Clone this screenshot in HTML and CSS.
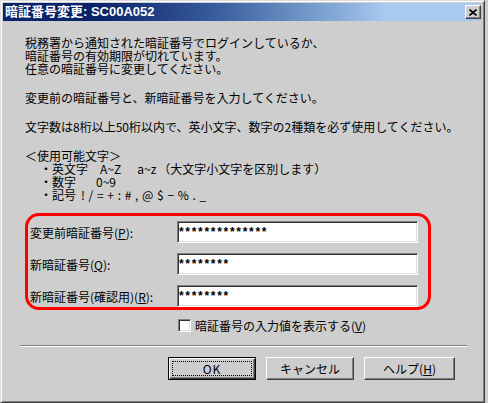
FILE: index.html
```html
<!DOCTYPE html>
<html lang="ja">
<head>
<meta charset="utf-8">
<title>暗証番号変更</title>
<link rel="stylesheet" href="styles.css">
</head>
<body>
<div class="window">
  <div class="titlebar">
    <span class="title">暗証番号変更: SC00A052</span>
    <span class="close"><svg width="8" height="7" viewBox="0 0 8 7"><path d="M0.5 0.5 L7.5 6.5 M7.5 0.5 L0.5 6.5" stroke="#000" stroke-width="1.6" fill="none"/></svg></span>
  </div>
  <div class="content">
    <p class="para">税務署から通知された暗証番号でログインしているか、<br>暗証番号の有効期限が切れています。<br>任意の暗証番号に変更してください。</p>
    <p class="para">変更前の暗証番号と、新暗証番号を入力してください。</p>
    <p class="para">文字数は8桁以上50桁以内で、英小文字、数字の2種類を必ず使用してください。</p>
    <div class="para last">
      <div>＜使用可能文字＞</div>
      <div class="item">・英文字<span class="gap g12"></span>A~Z<span class="gap g16"></span>a~z<span class="gap g2"></span>（大文字小文字を区別します）</div>
      <div class="item">・数字<span class="gap g20"></span>0~9</div>
      <div class="item">・記号<span class="gap g5"></span><span class="symbols">! / = + : # , @ $ − % . _</span></div>
    </div>
    <div class="fields">
      <label class="label">変更前暗証番号(<u>P</u>):</label>
      <input class="field" type="text" value="**************" readonly>
      <label class="label">新暗証番号(<u>Q</u>):</label>
      <input class="field" type="text" value="********" readonly>
      <label class="label">新暗証番号(確認用)(<u>R</u>):</label>
      <input class="field" type="text" value="********" readonly>
    </div>
    <div class="check-row">
      <span class="checkbox"></span>
      <span>暗証番号の入力値を表示する(<u>V</u>)</span>
    </div>
    <div class="separator"></div>
    <div class="buttons">
      <button class="btn default"><span class="focus">OK</span></button>
      <button class="btn">キャンセル</button>
      <button class="btn help">ヘルプ(<u>H</u>)</button>
    </div>
  </div>
</div>
</body>
</html>
```

FILE: styles.css
```css
html, body {
  margin: 0;
  padding: 0;
}
body {
  width: 488px;
  height: 403px;
  overflow: hidden;
  background: #cecece;
  font-family: "Noto Sans CJK JP", sans-serif;
  font-size: 12px;
  color: #000;
}
.window {
  width: 485px;
  height: 403px;
  box-sizing: border-box;
  border: 1px solid;
  border-color: #dcdcdc #404040 #404040 #dcdcdc;
  box-shadow: inset 1px 1px #ffffff, inset -1px -1px #808080;
  padding: 2px;
  display: flex;
  flex-direction: column;
  background: #cecece;
}
.titlebar {
  height: 18px;
  flex: none;
  display: flex;
  align-items: center;
  padding-left: 2px;
  background: linear-gradient(to right, #0a246a 0%, #0a246a 20%, #3a5e9e 45%, #a6caf0 80%, #a6caf0 100%);
}
.title {
  color: #fff;
  font-weight: bold;
  font-size: 13px;
  line-height: 18px;
  font-family: "Liberation Sans", "Noto Sans CJK JP", sans-serif;
  white-space: nowrap;
}
.close {
  margin-left: auto;
  margin-right: 1px;
  width: 16px;
  height: 14px;
  box-sizing: border-box;
  background: #cecece;
  border: 1px solid;
  border-color: #ffffff #404040 #404040 #ffffff;
  box-shadow: inset -1px -1px #808080;
  display: flex;
  align-items: center;
  justify-content: center;
}
.close svg {
  display: block;
}
.content {
  flex: 1;
  padding: 15px 0 0 22px;
}
.para {
  margin: 0 0 16px;
  line-height: 13px;
  white-space: nowrap;
}
.para.last {
  margin-bottom: 12px;
}
.item {
  padding-left: 15px;
}
.gap {
  display: inline-block;
}
.g2 { width: 2px; }
.g5 { width: 5px; }
.g12 { width: 12px; }
.g16 { width: 16px; }
.g20 { width: 20px; }
.symbols {
  word-spacing: 1px;
}
.fields {
  width: 406px;
  height: 97px;
  box-sizing: border-box;
  border: 3px solid #ff0000;
  border-radius: 14px;
  padding: 5px 10px 0 2px;
  display: grid;
  grid-template-columns: 147px 241px;
  grid-auto-rows: 22px;
  row-gap: 10px;
}
.label {
  align-self: center;
  white-space: nowrap;
  line-height: 13px;
}
.field {
  width: 241px;
  height: 22px;
  box-sizing: border-box;
  margin: 0;
  padding: 0 0 0 1px;
  border: 1px solid;
  border-color: #808080 #ffffff #ffffff #808080;
  box-shadow: inset 1px 1px #303030, inset -1px -1px #dcdcdc;
  background: #fff;
  font-family: "Liberation Sans", sans-serif;
  font-weight: bold;
  font-size: 12px;
  letter-spacing: 1.7px;
  color: #000;
  outline: none;
}
.check-row {
  margin: 9px 0 0 153px;
  height: 13px;
  display: flex;
  align-items: center;
  gap: 4px;
  line-height: 13px;
  white-space: nowrap;
}
.checkbox {
  width: 13px;
  height: 13px;
  box-sizing: border-box;
  background: #fff;
  border: 1px solid;
  border-color: #808080 #ffffff #ffffff #808080;
  box-shadow: inset 1px 1px #303030, inset -1px -1px #dcdcdc;
}
.separator {
  margin: 13px 0 0 -5px;
  width: 447px;
  height: 0;
  border-top: 1px solid #808080;
  border-bottom: 1px solid #ffffff;
}
.buttons {
  margin: 10px 0 0 143px;
  display: flex;
  gap: 10px;
}
.btn {
  width: 88px;
  height: 23px;
  box-sizing: border-box;
  margin: 0;
  padding: 0;
  background: #cecece;
  border: 1px solid;
  border-color: #ffffff #404040 #404040 #ffffff;
  box-shadow: inset -1px -1px #808080;
  font-family: "Noto Sans CJK JP", sans-serif;
  font-size: 12px;
  color: #000;
  display: flex;
  align-items: center;
  justify-content: center;
}
.btn.help {
  width: 91px;
}
.btn.default {
  border: 1px solid #000;
  box-shadow: inset 1px 1px #ffffff, inset -1px -1px #404040, inset -2px -2px #808080;
  padding: 3px;
}
.focus {
  flex: 1;
  align-self: stretch;
  border: 1px dotted #000;
  display: flex;
  align-items: center;
  justify-content: center;
  letter-spacing: 1px;
}
```
